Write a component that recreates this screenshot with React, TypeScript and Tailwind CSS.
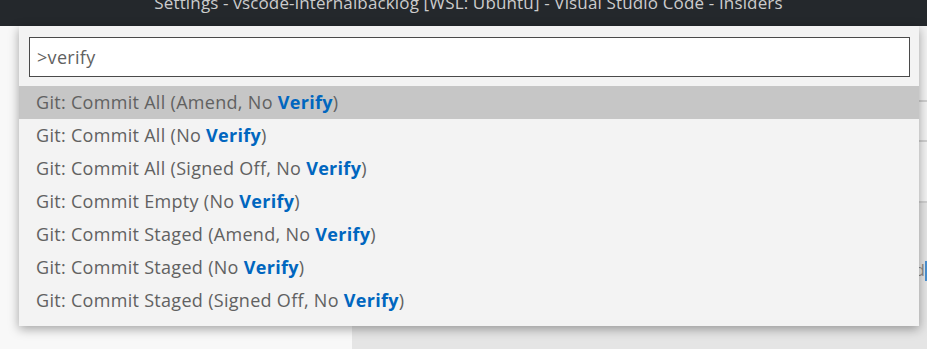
const ITEMS: [string, string][] = [
  ["Git: Commit All (Amend, No ", ")"],
  ["Git: Commit All (No ", ")"],
  ["Git: Commit All (Signed Off, No ", ")"],
  ["Git: Commit Empty (No ", ")"],
  ["Git: Commit Staged (Amend, No ", ")"],
  ["Git: Commit Staged (No ", ")"],
  ["Git: Commit Staged (Signed Off, No ", ")"],
];

export default function App() {
  return (
    <div
      className="w-[927px] h-[349px] overflow-hidden flex flex-col bg-[#f3f3f3]"
      style={{ fontFamily: "'Open Sans', 'Noto Sans', sans-serif" }}
    >
      {/* Title bar */}
      <div className="h-[26px] shrink-0 bg-[#24282c] flex justify-center items-end overflow-hidden pl-[10px]">
        <span className="text-[17px] leading-[17px] text-[#cccccc] mb-[15px] tracking-[0.15px] whitespace-nowrap">
          Settings - vscode-internalbacklog [WSL: Ubuntu] - Visual Studio Code - Insiders
        </span>
      </div>

      {/* Workbench behind the quick pick */}
      <div className="relative flex-1 flex">
        <div className="w-[352px] bg-[#f8f8f8]" />
        <div className="flex-1 flex flex-col">
          <div className="h-[76px] border-b-2 border-[#d0d0d0]" />
          <div className="h-[40px] border-b-2 border-[#d0d0d0]" />
          <div className="h-[61px] border-b-2 border-[#d0d0d0]" />
          <div className="flex-1 bg-[#e5e5e5] flex justify-end items-start pt-[56px]">
            <span className="text-[17px] leading-[22px] text-[#8a8a8a]">d</span>
            <span className="w-[2px] h-[20px] bg-[#4a90d0] mt-[2px]" />
          </div>
        </div>

        {/* Quick pick */}
        <div className="absolute left-[19px] top-0 w-[900px] h-[300px] bg-[#f3f3f3] shadow-[0_3px_10px_rgba(0,0,0,0.35)] flex flex-col px-[10px] pt-[11px]">
          <div className="h-[40px] border border-[#4a4a4a] bg-white flex items-center px-[7px] mr-[-1px]">
            <span className="text-[18px] text-[#616161] tracking-[0.3px]">&gt;verify</span>
          </div>
          <div className="flex flex-col mt-[9px] mx-[-10px]">
            {ITEMS.map(([pre, post], i) => (
              <div
                key={i}
                className={
                  "h-[33px] flex items-center pl-[17px] text-[18px] text-[#616161] tracking-[0.3px] whitespace-pre " +
                  (i === 0 ? "bg-[#c6c6c6]" : "")
                }
              >
                <span>
                  {pre}
                  <span className="font-bold text-[#0066bf]">Verify</span>
                  {post}
                </span>
              </div>
            ))}
          </div>
        </div>
      </div>
    </div>
  );
}
